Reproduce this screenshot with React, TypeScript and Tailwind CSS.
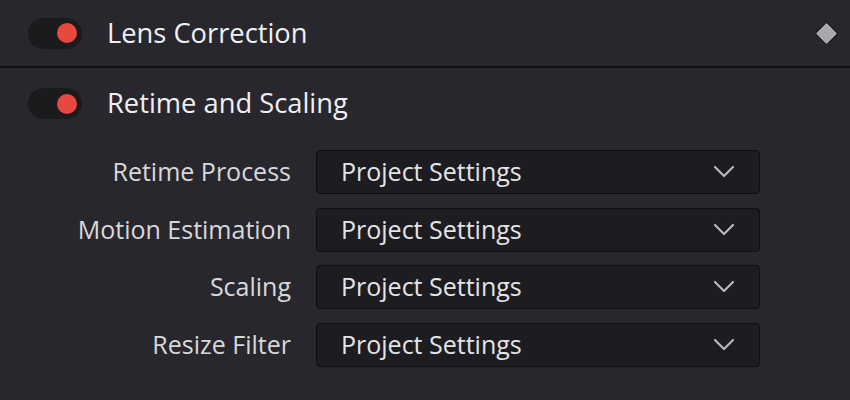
import React from "react";

function Toggle() {
  return (
    <div className="w-[54px] h-[31px] rounded-full bg-[#1b1b1e] flex items-center justify-end pr-[5px]">
      <div className="w-[20px] h-[20px] rounded-full bg-[#e8493f]" />
    </div>
  );
}

function Chevron() {
  return (
    <svg width="22" height="14" viewBox="0 0 22 14" fill="none">
      <path d="M2 2 L11 11 L20 2" stroke="#b8b8bc" strokeWidth="2.2" strokeLinecap="round" strokeLinejoin="round" />
    </svg>
  );
}

function Row({ label }: { label: string }) {
  return (
    <div className="flex items-center h-[44px]">
      <div className="w-[291px] text-right text-[25px] text-[#d8d8da] whitespace-nowrap">{label}</div>
      <div className="ml-[25px] w-[444px] h-[44px] rounded-[4px] bg-[#1d1c20] border border-[#0f0f11] flex items-center justify-between pl-[24px] pr-[24px]">
        <span className="text-[25px] text-[#e4e4e6]">Project Settings</span>
        <Chevron />
      </div>
    </div>
  );
}

export default function App() {
  return (
    <div className="w-[850px] h-[400px] bg-[#28272d] overflow-hidden" style={{ fontFamily: '"Open Sans", "Noto Sans", sans-serif' }}>
      <div className="h-[66px] flex items-center pl-[28px] pr-[12px]">
        <Toggle />
        <span className="ml-[25px] text-[27.3px] text-[#f0f0f2] font-medium">Lens Correction</span>
        <div className="ml-auto w-[24px] h-[24px] flex items-center justify-center">
          <div className="w-[17px] h-[17px] rotate-45 bg-[#a9a9ad] border-[1.5px] border-[#111] rounded-[2px]" />
        </div>
      </div>
      <div className="h-[2px] bg-[#111113]" />
      <div className="h-[68px] flex items-center pl-[28px] pt-[3px]">
        <Toggle />
        <span className="ml-[25px] text-[27.3px] text-[#f0f0f2] font-medium">Retime and Scaling</span>
      </div>
      <div className="flex flex-col gap-[13.5px] pt-[14px]">
        <Row label="Retime Process" />
        <Row label="Motion Estimation" />
        <Row label="Scaling" />
        <Row label="Resize Filter" />
      </div>
    </div>
  );
}
